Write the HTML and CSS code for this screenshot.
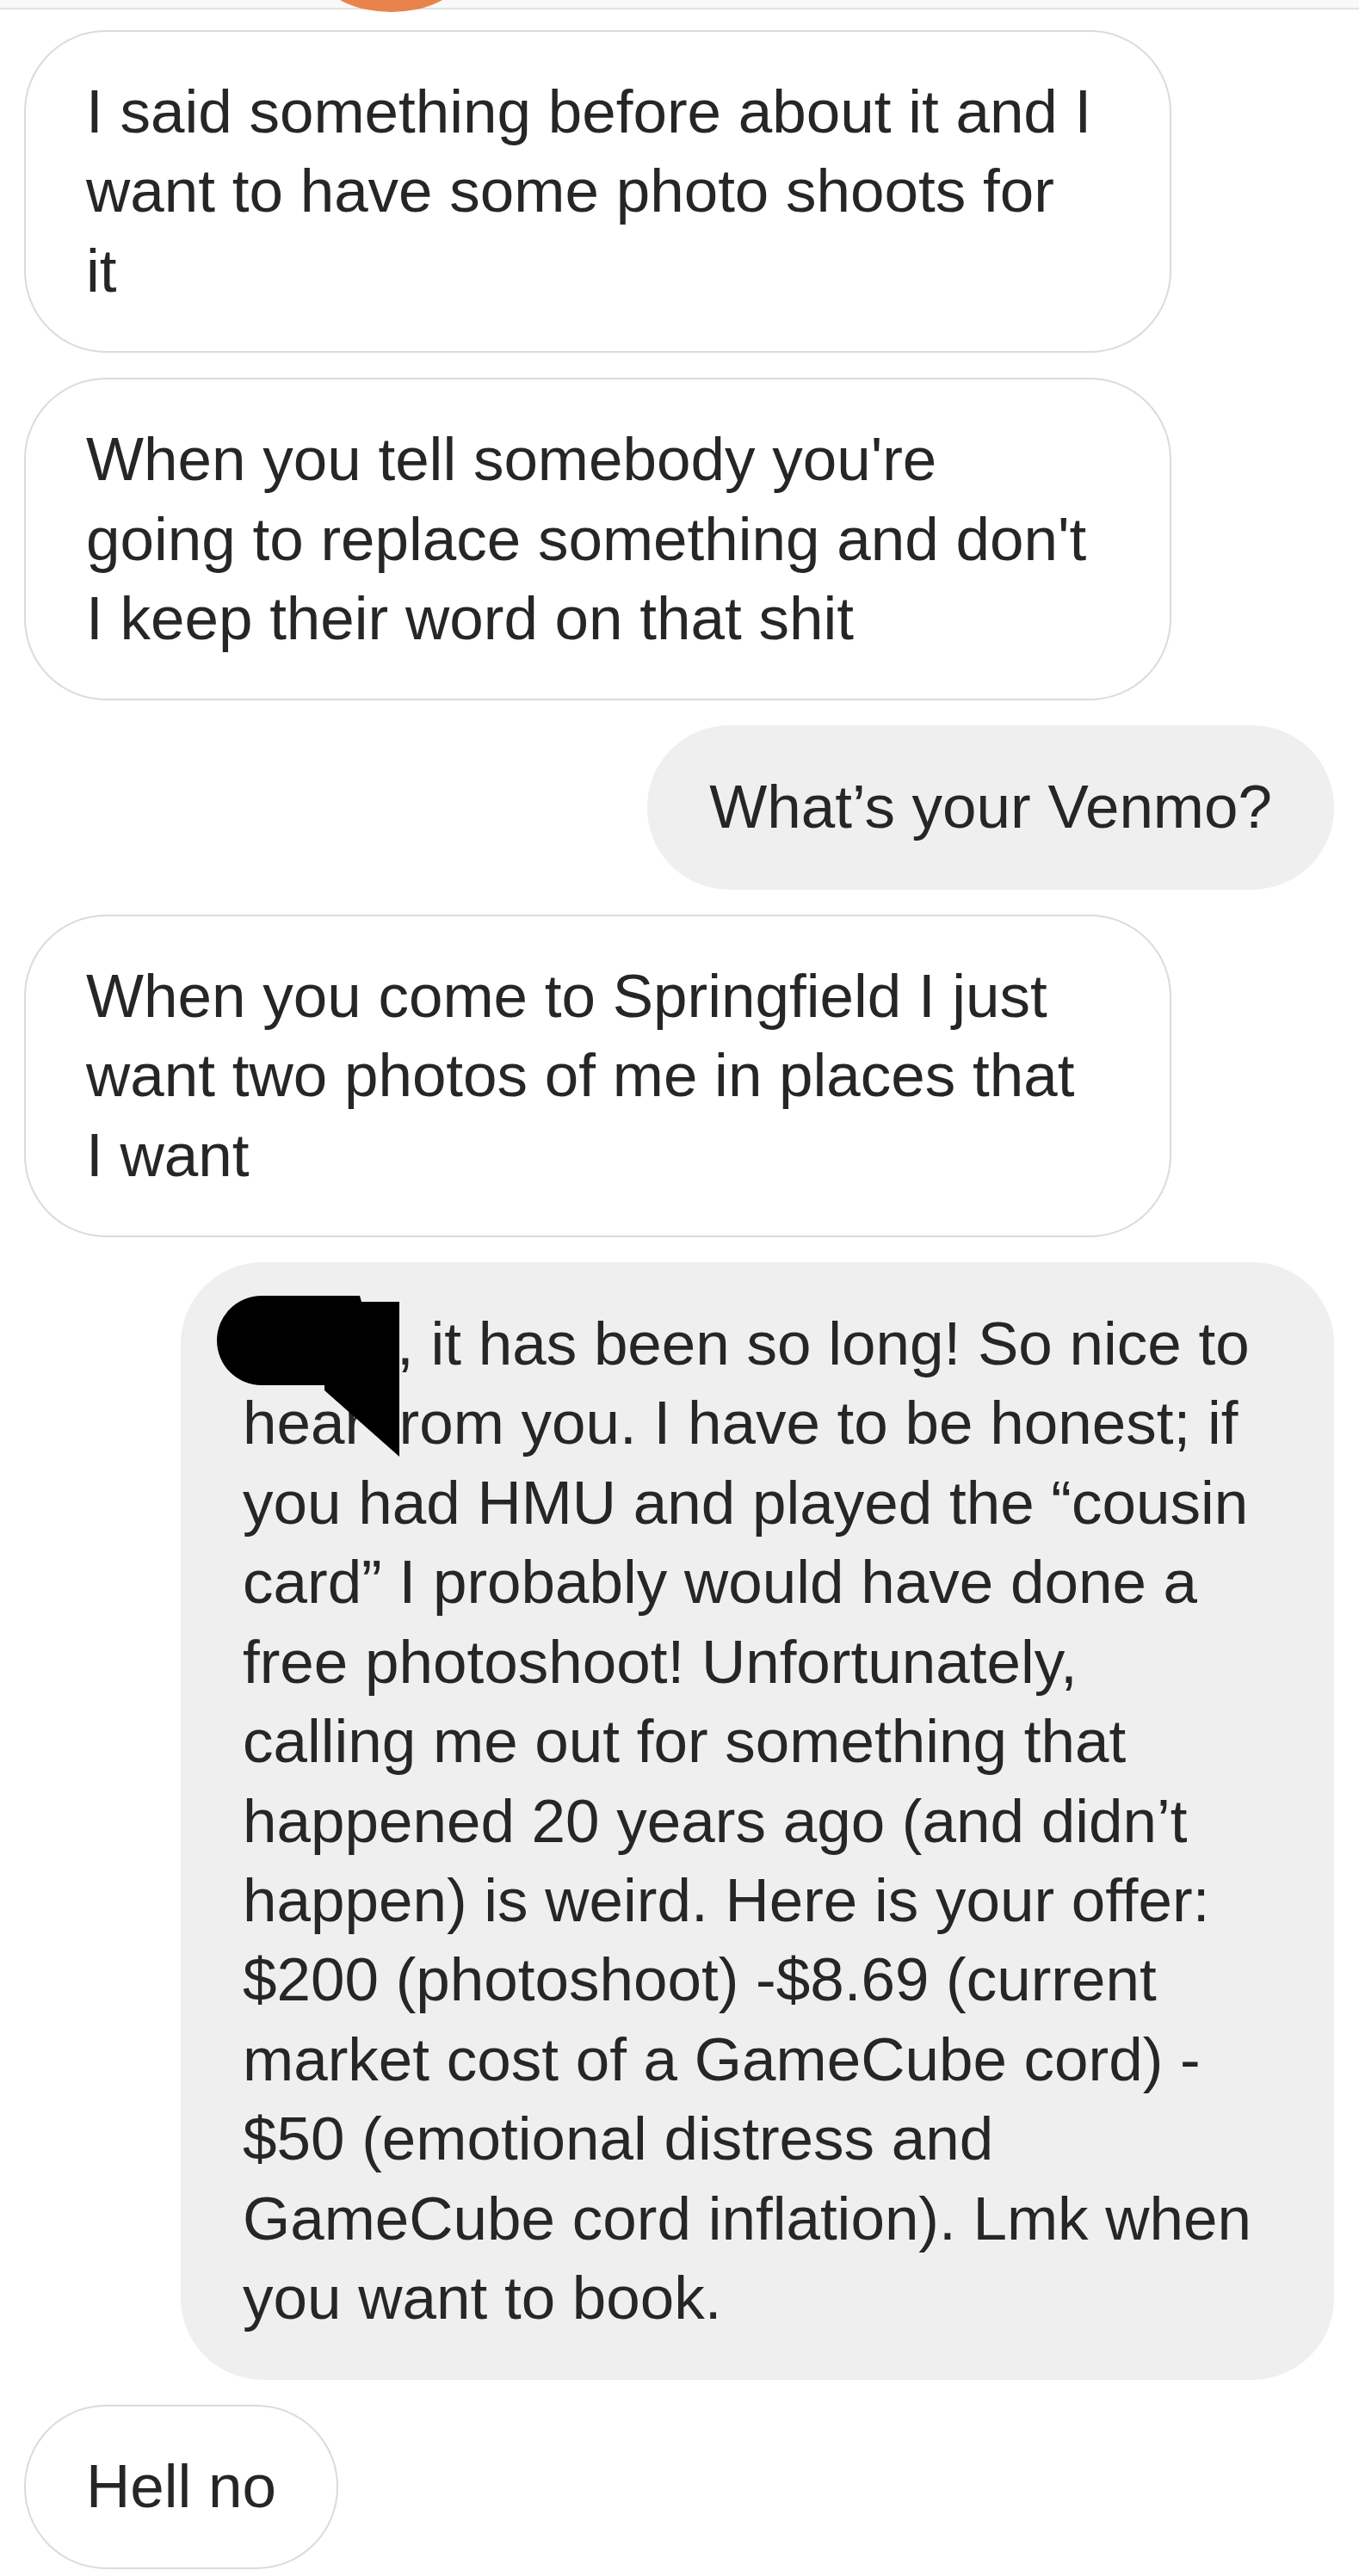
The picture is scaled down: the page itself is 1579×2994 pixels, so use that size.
FILE: index.html
```html
<!DOCTYPE html>
<html lang="en">
<head>
  <meta charset="UTF-8">
  <title>Messages</title>
  <meta name="viewport" content="width=device-width, initial-scale=1.0">
  <link rel="stylesheet" href="styles.css">
</head>
<body>
  <header class="topbar">
    <span class="avatar"></span>
  </header>

  <main class="chat">
    <div class="msg in wide">I said something before about it and I<br>want to have some photo shoots for<br>it</div>

    <div class="msg in wide">When you tell somebody you're<br>going to replace something and don't<br>I keep their word on that shit</div>

    <div class="msg out">What’s your Venmo?</div>

    <div class="msg in wide">When you come to Springfield I just<br>want two photos of me in places that<br>I want</div>

    <div class="msg out long">
      <!-- name blacked out in the original -->
      <svg class="redact" width="212" height="187" viewBox="0 0 212 187">
        <path d="M52 0 H166 L168 7 H212 V187 L125 110 V104 H52 A52 52 0 0 1 52 0 Z" fill="#000"/>
      </svg>
      <span class="name-gap"></span>, it has been so long! So nice to<br>hear from you. I have to be honest; if<br>you had HMU and played the “cousin<br>card” I probably would have done a<br>free photoshoot! Unfortunately,<br>calling me out for something that<br>happened 20 years ago (and didn’t<br>happen) is weird. Here is your offer:<br>$200 (photoshoot) -$8.69 (current<br>market cost of a GameCube cord) -<br>$50 (emotional distress and<br>GameCube cord inflation). Lmk when<br>you want to book.
    </div>

    <div class="msg in">Hell no</div>
  </main>
</body>
</html>
```

FILE: styles.css
```css
body {
  margin: 0;
  background: #fff;
  color: #262626;
  font-family: "Liberation Sans", Arial, Helvetica, sans-serif;
}
.topbar {
  position: relative;
  height: 9px;
  background: #f9f9f9;
  border-bottom: 2px solid #e2e2e2;
}
.avatar {
  position: absolute;
  left: 378px;
  top: -62px;
  width: 153px;
  height: 76px;
  border-radius: 50%;
  background: #e8844b;
}
.chat {
  display: flex;
  flex-direction: column;
  gap: 29px;
  padding: 24px 29px 0 28px;
}
.msg {
  box-sizing: border-box;
  font-size: 71px;
  line-height: 92.4px;
  padding: 47px 70px;
  border: 2px solid #dbdbdb;
  border-radius: 95px;
  white-space: nowrap;
}
.msg.in {
  align-self: flex-start;
  background: #fff;
}
.msg.in.wide {
  width: 1333px;
}
.msg.out {
  align-self: flex-end;
  background: #efefef;
  border-color: #efefef;
}
.msg.long {
  position: relative;
  width: 1340px;
}
.name-gap {
  display: inline-block;
  width: 179px;
}
.redact {
  position: absolute;
  left: 40px;
  top: 37px;
}
```
